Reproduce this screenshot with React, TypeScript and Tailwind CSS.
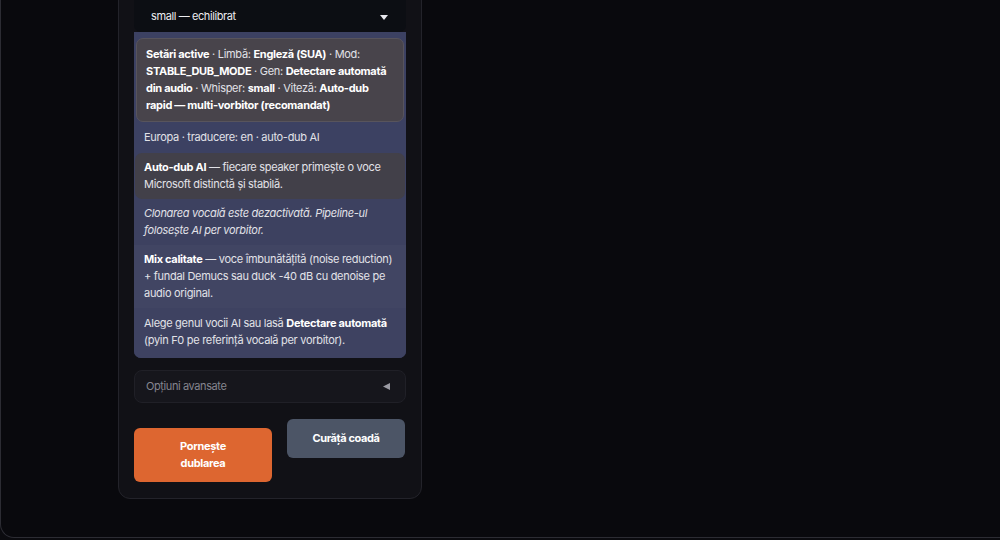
import React from "react";

export default function App() {
  return (
    <div className="w-[1000px] h-[540px] overflow-hidden bg-[#0b0b0f]" style={{ fontFamily: "Inter, 'Noto Sans', sans-serif" }}>
      <div className="h-[538px] w-[1010px] border-l border-b border-[#2c2c33] rounded-bl-[14px] bg-[#09090d] pl-[117px] overflow-hidden">
        <div className="w-[304px] mt-[-20px] rounded-[12px] border border-[#23232a] bg-[#111116] px-[15px] pb-[16px]">
          <div className="h-[51px] flex items-end">
            <div className="w-full h-[40px] flex items-center justify-between rounded-b-[7px] bg-[#0c0e13] pl-[17px] pr-[18px] pt-[9px] text-[11px] tracking-[-0.4px] text-[#ececf0]">
              <span>small — echilibrat</span>
              <svg width="8" height="5" viewBox="0 0 8 5" className="mt-[1px]"><path d="M0 0 H8 L4 5 Z" fill="#e8e8ee" /></svg>
            </div>
          </div>
          <div className="rounded-b-[7px] bg-[#3c4162] pt-[6px] text-[11px] tracking-[-0.3px] leading-[17px] text-[#e2e2e8]">
            <div className="mx-[2px] rounded-[7px] border border-[#58545c] bg-[#48444b] px-[9px] py-[7px]">
              <b className="text-white">Setări active</b> · Limbă: <b className="text-white">Engleză (SUA)</b> · Mod: <b className="text-white">STABLE_DUB_MODE</b> · Gen: <b className="text-white">Detectare automată din audio</b> · Whisper: <b className="text-white">small</b> · Viteză: <b className="text-white">Auto-dub rapid — multi-vorbitor (recomandat)</b>
            </div>
            <div className="px-[10px] py-[7px]">Europa · traducere: en · auto-dub AI</div>
            <div className="mx-[1px] rounded-[7px] bg-[#424049] px-[9px] py-[6px]">
              <b className="text-white">Auto-dub AI</b> — fiecare speaker primește o voce Microsoft distinctă și stabilă.
            </div>
            <div className="px-[10px] py-[6px] italic bg-[#3d4160]">Clonarea vocală este dezactivată. Pipeline-ul folosește AI per vorbitor.</div>
            <div className="px-[10px] py-[6px] bg-[#414563]">
              <b className="text-white">Mix calitate</b> — voce îmbunătățită (noise reduction) + fundal Demucs sau duck -40 dB cu denoise pe audio original.
            </div>
            <div className="px-[10px] pt-[7px] pb-[9px] rounded-b-[7px] bg-[#3e4261]">
              Alege genul vocii AI sau lasă <b className="text-white">Detectare automată</b> (pyin F0 pe referință vocală per vorbitor).
            </div>
          </div>
          <div className="mt-[12px] h-[33px] flex items-center justify-between rounded-[8px] border border-[#202027] bg-[#16161c] px-[11px] text-[11px] tracking-[-0.4px] text-[#85858f]">
            <span>Opțiuni avansate</span>
            <svg width="7" height="7" viewBox="0 0 7 7" className="mr-[4px]"><path d="M0 3.5 L7 0 V7 Z" fill="#9a9aa3" /></svg>
          </div>
          <div className="mt-[16px] flex items-start gap-[15px]">
            <button className="mt-[9px] w-[138px] h-[54px] rounded-[6px] bg-[#dd6630] px-[20px] text-[11px] tracking-[-0.3px] leading-[17px] font-bold text-white">Pornește<br />dublarea</button>
            <button className="w-[118px] h-[39px] rounded-[6px] bg-[#4c5566] text-[11px] tracking-[-0.4px] font-bold text-white">Curăță coadă</button>
          </div>
        </div>
      </div>
    </div>
  );
}
